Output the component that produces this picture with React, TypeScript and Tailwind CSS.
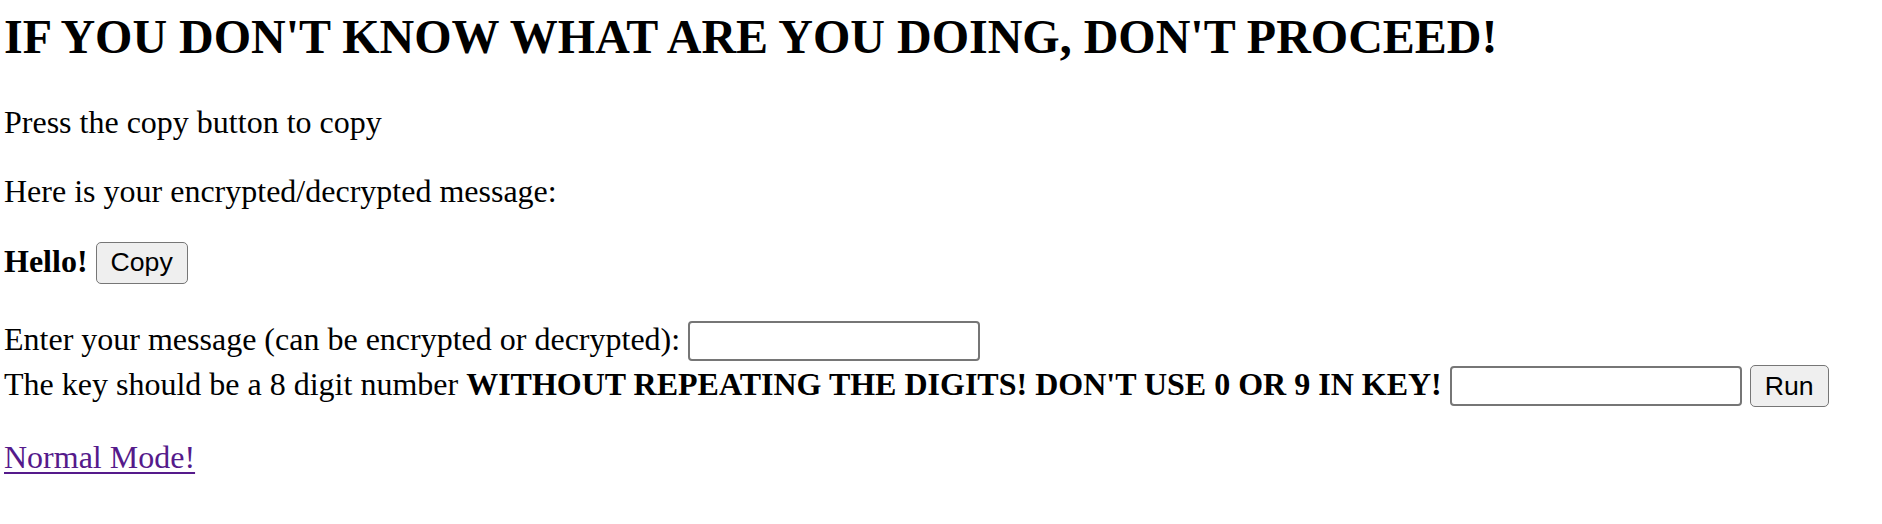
const serif = "font-['Liberation_Serif','Times_New_Roman',serif]";
const btn =
  "inline-block h-[42px] px-[14px] align-baseline border border-[#767676] rounded-[5px] bg-[#efefef] text-black text-[26.67px] leading-none font-['Liberation_Sans',Arial,sans-serif]";
const field =
  "inline-block w-[292px] h-[40px] align-baseline border-2 border-[#767676] rounded-[4px] bg-white px-[4px] text-[26.67px] font-['Liberation_Sans',Arial,sans-serif]";

export default function App() {
  return (
    <div className={`${serif} min-h-[524px] bg-white pl-[4px] pt-[9px] text-[32px] leading-[1.15] text-black`}>
      <h2 className="mb-[40px] text-[48px] font-bold leading-[1.15]">
        IF YOU DON'T KNOW WHAT ARE YOU DOING, DON'T PROCEED!
      </h2>

      <p className="mb-[32px]">Press the copy button to copy</p>
      <p className="mb-[32px]">Here is your encrypted/decrypted message:</p>

      <p className="mb-[37px]">
        <b>Hello!</b> <button className={btn}>Copy</button>
      </p>

      <div>
        Enter your message (can be encrypted or decrypted): <input className={field} type="text" />
      </div>
      <div className="mt-[4px]">
        The key should be a 8 digit number{" "}
        <b>WITHOUT REPEATING THE DIGITS! DON'T USE 0 OR 9 IN KEY!</b>{" "}
        <input className={field} type="text" /> <button className={`${btn} h-[41px]`}>Run</button>
      </div>

      <p className="mt-[32px]">
        <a href="#" className="text-[#551a8b] underline decoration-[2px] underline-offset-[4px]">
          Normal Mode!
        </a>
      </p>
    </div>
  );
}
